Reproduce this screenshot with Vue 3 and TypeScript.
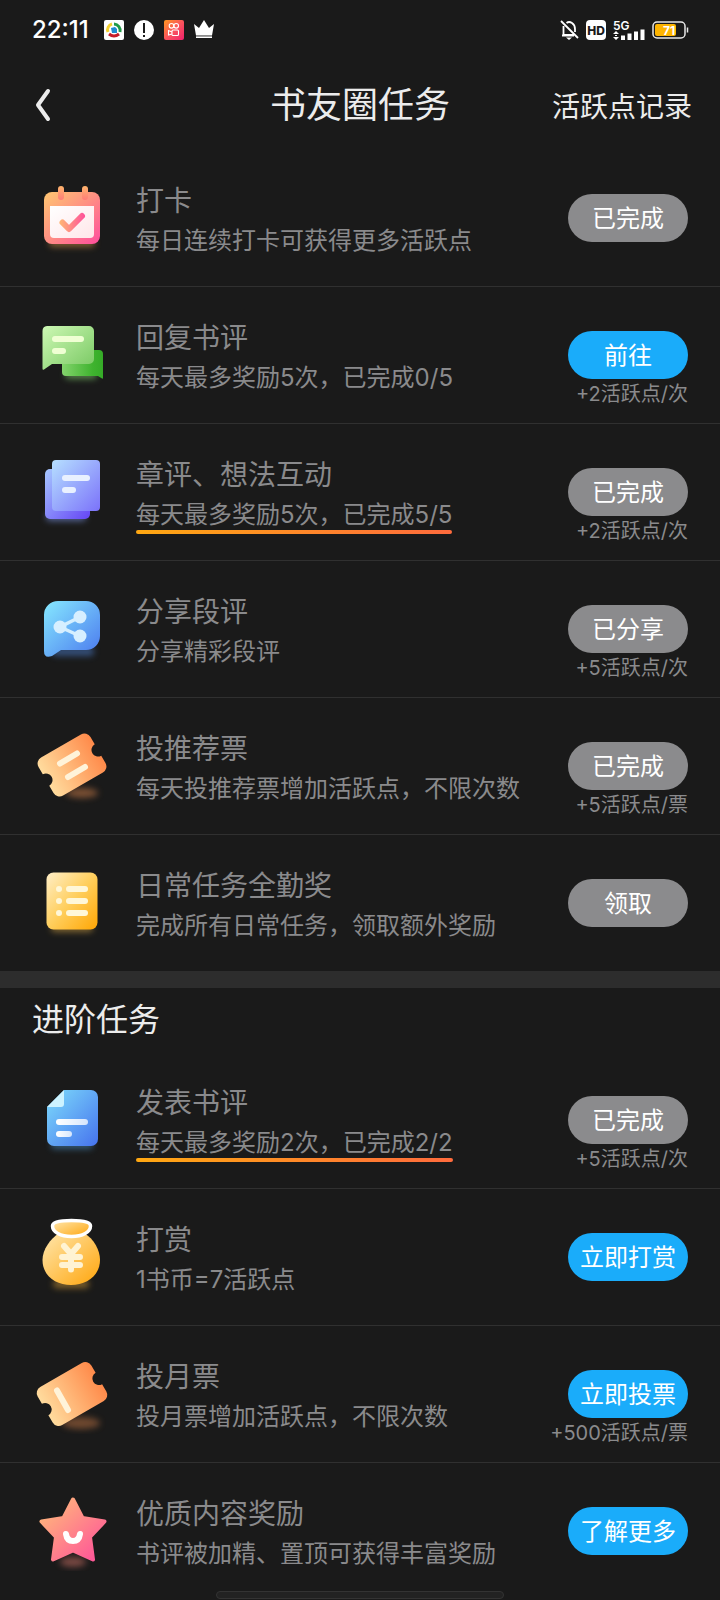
<script setup lang="ts">
type IconName =
  | 'calendar' | 'chat' | 'pages' | 'share' | 'ticket'
  | 'list' | 'doc' | 'bag' | 'pass' | 'star'

interface Task {
  icon: IconName
  title: string
  desc: string
  action: string
  active?: boolean
  reward?: string
  underlined?: boolean
}

const daily: Task[] = [
  { icon: 'calendar', title: '打卡', desc: '每日连续打卡可获得更多活跃点', action: '已完成' },
  { icon: 'chat', title: '回复书评', desc: '每天最多奖励5次，已完成0/5', action: '前往', active: true, reward: '+2活跃点/次' },
  { icon: 'pages', title: '章评、想法互动', desc: '每天最多奖励5次，已完成5/5', action: '已完成', reward: '+2活跃点/次', underlined: true },
  { icon: 'share', title: '分享段评', desc: '分享精彩段评', action: '已分享', reward: '+5活跃点/次' },
  { icon: 'ticket', title: '投推荐票', desc: '每天投推荐票增加活跃点，不限次数', action: '已完成', reward: '+5活跃点/票' },
  { icon: 'list', title: '日常任务全勤奖', desc: '完成所有日常任务，领取额外奖励', action: '领取' },
]

const advanced: Task[] = [
  { icon: 'doc', title: '发表书评', desc: '每天最多奖励2次，已完成2/2', action: '已完成', reward: '+5活跃点/次', underlined: true },
  { icon: 'bag', title: '打赏', desc: '1书币=7活跃点', action: '立即打赏', active: true },
  { icon: 'pass', title: '投月票', desc: '投月票增加活跃点，不限次数', action: '立即投票', active: true, reward: '+500活跃点/票' },
  { icon: 'star', title: '优质内容奖励', desc: '书评被加精、置顶可获得丰富奖励', action: '了解更多', active: true },
]

const groups = [
  { id: 'daily', heading: '', tasks: daily },
  { id: 'advanced', heading: '进阶任务', tasks: advanced },
]
</script>

<template>
  <div class="screen">
    <svg class="defs" width="0" height="0" aria-hidden="true">
      <defs>
        <linearGradient id="g-pink" x1="0" y1="0" x2="1" y2="1"><stop offset="0" stop-color="#ffc771" /><stop offset=".5" stop-color="#ff8e83" /><stop offset="1" stop-color="#ff4c9e" /></linearGradient>
        <linearGradient id="g-ring" x1="0" y1="0" x2="0" y2="1"><stop offset="0" stop-color="#ffb56c" /><stop offset="1" stop-color="#ff7c78" /></linearGradient>
        <linearGradient id="g-panel" x1="0" y1="0" x2="1" y2="1"><stop offset="0" stop-color="#ffffff" /><stop offset="1" stop-color="#ffe6e9" /></linearGradient>
        <linearGradient id="g-mint" x1="0" y1="0" x2="1" y2="1"><stop offset="0" stop-color="#cdf8b4" /><stop offset="1" stop-color="#78c862" /></linearGradient>
        <linearGradient id="g-green" x1="0" y1="0" x2="1" y2="0"><stop offset="0" stop-color="#83d46c" /><stop offset=".75" stop-color="#3fb32f" /><stop offset="1" stop-color="#35ab27" /></linearGradient>
        <linearGradient id="g-lilac" x1="0" y1="0" x2="1" y2="1"><stop offset="0" stop-color="#b6e0ff" /><stop offset="1" stop-color="#7b72fa" /></linearGradient>
        <linearGradient id="g-violet" x1="0" y1="0" x2="1" y2="1"><stop offset="0" stop-color="#a7c8ff" /><stop offset="1" stop-color="#6545f5" /></linearGradient>
        <linearGradient id="g-blue" x1="0" y1="0" x2="1" y2="1"><stop offset="0" stop-color="#86e9ff" /><stop offset="1" stop-color="#4a78ee" /></linearGradient>
        <linearGradient id="g-doc" x1="0" y1="0" x2="1" y2="1"><stop offset="0" stop-color="#7ddcfb" /><stop offset="1" stop-color="#4673ee" /></linearGradient>
        <linearGradient id="g-orange" x1="0" y1="0" x2="1" y2="0"><stop offset="0" stop-color="#ffdc9e" /><stop offset="1" stop-color="#ff8a4a" /></linearGradient>
        <linearGradient id="g-gold" x1="0" y1="0" x2="1" y2="1"><stop offset="0" stop-color="#ffefc8" /><stop offset=".5" stop-color="#ffce5c" /><stop offset="1" stop-color="#ffa604" /></linearGradient>
        <linearGradient id="g-bag" x1="0" y1="0" x2="1" y2="1"><stop offset="0" stop-color="#ffe7ae" /><stop offset="1" stop-color="#ffa50b" /></linearGradient>
        <linearGradient id="g-star" x1="0" y1="0" x2="1" y2="1"><stop offset=".1" stop-color="#ffb57c" /><stop offset=".9" stop-color="#ff5997" /></linearGradient>
        <linearGradient id="g-line" x1="0" y1="0" x2="1" y2="0"><stop offset="0" stop-color="#ffffff" /><stop offset="1" stop-color="#ffffff" stop-opacity=".75" /></linearGradient>
        <linearGradient id="g-check" gradientUnits="userSpaceOnUse" x1="28" y1="40" x2="52" y2="40"><stop offset="0" stop-color="#ffb576" /><stop offset="1" stop-color="#ff5499" /></linearGradient>
        <linearGradient id="g-app" x1="0" y1="0" x2="1" y2="1"><stop offset="0" stop-color="#ff971f" /><stop offset=".5" stop-color="#fa555c" /><stop offset="1" stop-color="#f0206c" /></linearGradient>
        <filter id="glow" x="-30%" y="-100%" width="160%" height="300%"><feGaussianBlur stdDeviation="3" /></filter>
      </defs>
    </svg>

    <div class="status">
      <time class="clock">22:11</time>
      <div class="notices">
        <svg width="20" height="20" viewBox="0 0 20 20" aria-hidden="true">
          <rect width="20" height="20" rx="2" fill="#fff" />
          <g fill="none" stroke-width="3">
            <path d="M4 12A6 6 0 0 1 8 4" stroke="#f5d131" />
            <path d="M10 4A6.500 6.500 0 0 1 16 12" stroke="#219a48" />
            <path d="M5 14Q10 18 15 14" stroke="#c51c29" />
          </g>
          <path d="M7 8l4-1 2 2v4H8z" fill="#218bd0" />
        </svg>
        <svg width="20" height="20" viewBox="0 0 20 20" aria-hidden="true">
          <circle cx="10" cy="10" r="10" fill="#fff" />
          <path d="M10 3v10M10 15v2" stroke="#1a1a1a" stroke-width="2" />
        </svg>
        <svg width="20" height="20" viewBox="0 0 20 20" aria-hidden="true">
          <rect width="20" height="20" rx="2" fill="url(#g-app)" />
          <g fill="none" stroke="#fff" stroke-width="1.100">
            <circle cx="7.500" cy="5.800" r="2.300" /><circle cx="12.200" cy="5.800" r="2.300" />
            <rect x="8" y="10" width="6.500" height="5.500" rx="1" /><path d="M8 12L4.500 10.500v4.500L8 14" />
          </g>
        </svg>
        <svg width="20" height="20" viewBox="0 0 20 20" aria-hidden="true">
          <path d="M0 4l5 4 5-8 5 8 5-4-2 11.500H2z" fill="#fff" />
          <path d="M2 17.200h16" stroke="#fff" stroke-width="1.600" />
        </svg>
      </div>
      <div class="signals">
        <svg width="20" height="20" viewBox="0 0 20 20" aria-label="静音">
          <g fill="none" stroke="#fff" stroke-width="1.800">
            <path d="M1 1l17 17M6.500 3Q9 1 12 3q3 2 3 6v3M3.500 6v9H14M2 15.500h12" />
          </g>
          <path d="M6 17.500h6L9 20z" fill="#fff" />
        </svg>
        <svg width="20" height="20" viewBox="0 0 20 20">
          <rect width="20" height="20" rx="4" fill="#fff" />
          <text x="10" y="14.500" text-anchor="middle" font-size="12" font-weight="800" fill="#1a1a1a">HD</text>
        </svg>
        <svg width="34" height="24" viewBox="0 0 34 24">
          <text x="1" y="12" font-size="12" font-weight="600" fill="#fff">5G</text>
          <path d="M1 16l3-3 3 3zM1 19l3 3 3-3z" fill="#fff" />
          <path d="M3 17h2v1H3z" fill="#fff" />
          <path d="M11 22v-4.500M17.500 22v-6.500M24 22v-8.500M30.500 22V11.500" stroke="#fff" stroke-width="4" />
        </svg>
        <svg width="37" height="18" viewBox="0 0 37 18">
          <rect x="1" y="1" width="32" height="16" rx="4" fill="none" stroke="#e8e8e8" stroke-width="1.500" />
          <rect x="3" y="3" width="21" height="12" rx="2" fill="#fdb400" />
          <path d="M35.500 6.500v5" stroke="#e8e8e8" stroke-width="1.500" />
          <text x="17" y="13.500" text-anchor="middle" font-size="12" font-weight="700" fill="#fff">71</text>
        </svg>
      </div>
    </div>

    <header class="nav">
      <button class="back" type="button" aria-label="返回">
        <svg width="16" height="34" viewBox="0 0 16 34" aria-hidden="true">
          <path d="M13 3L3 17l10 14" fill="none" stroke="#ececec" stroke-width="4" stroke-linecap="round" stroke-linejoin="round" />
        </svg>
      </button>
      <h1>书友圈任务</h1>
      <a class="records" href="#records">活跃点记录</a>
    </header>

    <main>
      <section v-for="group in groups" :key="group.id" class="group">
        <h2 v-if="group.heading">{{ group.heading }}</h2>
        <ul>
          <li v-for="task in group.tasks" :key="task.title" class="task">
            <svg class="icon" viewBox="0 0 80 80" aria-hidden="true">
              <template v-if="task.icon === 'calendar'">
                <rect x="17" y="61" width="46" height="8" rx="4" fill="#c58a45" opacity=".6" filter="url(#glow)" />
                <rect x="12" y="14" width="56" height="52" rx="8" fill="url(#g-pink)" />
                <rect x="26" y="8" width="6" height="14" rx="3" fill="url(#g-ring)" />
                <rect x="50" y="8" width="6" height="14" rx="3" fill="url(#g-ring)" />
                <path d="M18 28h44v28a4 4 0 0 1-4 4H22a4 4 0 0 1-4-4z" fill="url(#g-panel)" />
                <path d="M30.500 44.500l6.500 6.500L50 38" fill="none" stroke="url(#g-check)" stroke-width="6" stroke-linecap="round" stroke-linejoin="round" />
              </template>
              <template v-else-if="task.icon === 'chat'">
                <rect x="33" y="56" width="32" height="8" rx="4" fill="#80c86c" opacity=".6" filter="url(#glow)" />
                <path d="M34 35h33a4 4 0 0 1 4 4v24q0 1-1 0.500L66 61H34a4 4 0 0 1-4-4V39a4 4 0 0 1 4-4z" fill="url(#g-green)" />
                <path d="M15 11h42a5 5 0 0 1 5 5v28a5 5 0 0 1-5 5H20l-8 5.500q-1.500 1-1.500-1V16a5 5 0 0 1 4.500-5z" fill="url(#g-mint)" />
                <rect x="20" y="21" width="32" height="6" rx="3" fill="#efffd3" />
                <rect x="20" y="33" width="14" height="6" rx="3" fill="#efffd3" />
              </template>
              <template v-else-if="task.icon === 'pages'">
                <rect x="14" y="61" width="40" height="8" rx="4" fill="#7d98e8" opacity=".6" filter="url(#glow)" />
                <rect x="13" y="17" width="45" height="50" rx="5" fill="url(#g-violet)" />
                <rect x="20" y="8" width="48" height="51" rx="4" fill="url(#g-lilac)" />
                <rect x="30" y="23" width="28" height="6" rx="3" fill="#e9f1ff" />
                <rect x="30" y="35" width="14" height="6" rx="3" fill="#e9f1ff" />
              </template>
              <template v-else-if="task.icon === 'share'">
                <rect x="20" y="58" width="42" height="9" rx="4" fill="#4675bb" opacity=".6" filter="url(#glow)" />
                <path d="M26 12h28a14 14 0 0 1 14 14v21a14 14 0 0 1-14 14H29l-9 6q-8 3-8-5V26a14 14 0 0 1 14-14z" fill="url(#g-blue)" />
                <path d="M48 28L28 38l20 9" fill="none" stroke="#d5efff" stroke-width="3.500" />
                <g fill="#d7efff"><circle cx="28" cy="38" r="6.500" /><circle cx="48" cy="28" r="6.500" /><circle cx="48" cy="47" r="6.500" /></g>
              </template>
              <template v-else-if="task.icon === 'ticket'">
                <ellipse cx="50" cy="67" rx="16" ry="5" fill="#bd7545" opacity=".6" filter="url(#glow)" />
                <path transform="rotate(-30 40 39)" d="M17 17h46a7 7 0 0 1 7 7v8.500a6.500 6.500 0 0 0 0 13V54a7 7 0 0 1-7 7H17a7 7 0 0 1-7-7v-8.500a6.500 6.500 0 0 0 0-13V24a7 7 0 0 1 7-7z" fill="url(#g-orange)" />
                <path d="M28 37.500l17-10M36 51l17-10" stroke="#fff3d9" stroke-width="6" stroke-linecap="round" />
              </template>
              <template v-else-if="task.icon === 'list'">
                <rect x="19" y="61" width="42" height="8" rx="4" fill="#c79a3f" opacity=".6" filter="url(#glow)" />
                <rect x="14.500" y="9.500" width="51" height="57" rx="7" fill="url(#g-gold)" />
                <g fill="#fff7d8">
                  <circle cx="27" cy="26" r="3" /><circle cx="27" cy="38" r="3" /><circle cx="27" cy="50" r="3" />
                  <rect x="34" y="23" width="22" height="6" rx="3" /><rect x="34" y="35" width="22" height="6" rx="3" /><rect x="34" y="47" width="22" height="6" rx="3" />
                </g>
              </template>
              <template v-else-if="task.icon === 'doc'">
                <rect x="19" y="61" width="42" height="8" rx="4" fill="#4687b5" opacity=".6" filter="url(#glow)" />
                <path d="M32 10h27a7 7 0 0 1 7 7v42a7 7 0 0 1-7 7H22a7 7 0 0 1-7-7V27z" fill="url(#g-doc)" />
                <path d="M32 10v14q0 3-3 3H15z" fill="#cdf3ff" />
                <rect x="24" y="39" width="32" height="6" rx="3" fill="url(#g-line)" />
                <rect x="24" y="51" width="16" height="6" rx="3" fill="url(#g-line)" />
              </template>
              <template v-else-if="task.icon === 'bag'">
                <rect x="21" y="63" width="36" height="8" rx="4" fill="#c79337" opacity=".6" filter="url(#glow)" />
                <path d="M27 16h25c10 6 16 17 16 27 0 16-14 25-29 25S10.500 59 10.500 43c0-11 8-21 16.500-27z" fill="url(#g-bag)" />
                <path d="M20.500 9C20.500 5 28 3.500 39.500 3.500S58.500 5 58.500 9c0 6-8 10.500-19 10.500S20.500 15 20.500 9z" fill="url(#g-bag)" stroke="#fff" stroke-width="3.500" />
                <path d="M32 29l7 8 7-8M39 37v15.500M30 40h18M30 48h18" fill="none" stroke="#fff3d3" stroke-width="6" stroke-linecap="round" stroke-linejoin="round" />
              </template>
              <template v-else-if="task.icon === 'pass'">
                <ellipse cx="49" cy="69" rx="19" ry="6" fill="#a8683c" opacity=".6" filter="url(#glow)" />
                <path transform="rotate(-30 40 40)" d="M16 18h48a7 7 0 0 1 7 7v8.500a6.500 6.500 0 0 0 0 13V55a7 7 0 0 1-7 7H16a7 7 0 0 1-7-7v-8.500a6.500 6.500 0 0 0 0-13V25a7 7 0 0 1 7-7z" fill="url(#g-orange)" />
                <path d="M25 36.500l11 19.500" stroke="#fff3d9" stroke-width="6" stroke-linecap="round" />
              </template>
              <template v-else>
                <ellipse cx="41" cy="71" rx="13" ry="5" fill="#a45d55" opacity=".7" filter="url(#glow)" />
                <path d="M41 8.500l9.500 18.500L72.500 30.500 58 46l3 22.500-20-9-20 9 3-22.500L9.500 30.500 31.500 27z" fill="url(#g-star)" stroke="url(#g-star)" stroke-width="4" stroke-linejoin="round" />
                <path d="M34 43q1 7 7 7t7-7" fill="none" stroke="#fff" stroke-width="6" stroke-linecap="round" />
              </template>
            </svg>
            <div class="text">
              <h3>{{ task.title }}</h3>
              <p><span :class="{ underlined: task.underlined }">{{ task.desc }}</span></p>
            </div>
            <div class="side">
              <button type="button" class="action" :class="{ active: task.active }">{{ task.action }}</button>
              <span v-if="task.reward" class="reward">{{ task.reward }}</span>
            </div>
          </li>
        </ul>
      </section>
    </main>
    <div class="home-bar"></div>
  </div>
</template>

<style>
body {
  margin: 0;
  background: #1a1a1a;
}
</style>

<style scoped>
.screen {
  position: relative;
  min-height: 100vh;
  background: #1a1a1a;
  color: #ececec;
  font-family: Inter, "Noto Sans CJK SC", sans-serif;
}
.defs {
  position: absolute;
}
.status {
  display: flex;
  align-items: center;
  height: 60px;
  padding: 0 31px 0 32px;
  box-sizing: border-box;
}
.clock {
  font-size: 24px;
  line-height: 32px;
  font-weight: 500;
  color: #fff;
}
.notices {
  display: flex;
  gap: 10px;
  margin-left: 15px;
}
.signals {
  display: flex;
  align-items: center;
  gap: 6px;
  margin-left: auto;
}
.nav {
  display: grid;
  grid-template-columns: 1fr auto 1fr;
  align-items: center;
  height: 90px;
  padding: 0 28px;
  box-sizing: border-box;
}
.back {
  justify-self: start;
  display: flex;
  padding: 0 7px;
  border: 0;
  background: none;
}
h1, h2, h3, p, ul {
  margin: 0;
  padding: 0;
  font-weight: 400;
}
h1 {
  font-size: 36px;
  line-height: 48px;
}
.records {
  justify-self: end;
  padding-top: 4px;
  font-size: 28px;
  line-height: 40px;
  color: #ececec;
  text-decoration: none;
}
.group + .group {
  border-top: 17px solid #2d2d2d;
}
h2 {
  padding: 8px 32px;
  font-size: 32px;
  line-height: 48px;
}
ul {
  list-style: none;
}
.task {
  display: flex;
  min-height: 137px;
  box-sizing: border-box;
  padding: 0 32px;
  border-bottom: 1px solid #303030;
}
.task:last-child {
  min-height: 136px;
  border-bottom: 0;
}
.icon {
  flex: none;
  width: 80px;
  height: 80px;
  margin-top: 28px;
}
.text {
  flex: 1;
  min-width: 0;
  padding: 31px 0 0 24px;
  color: #8a8a8c;
  white-space: nowrap;
}
h3 {
  font-size: 28px;
  line-height: 40px;
}
p {
  font-size: 24px;
  line-height: 40px;
}
p span {
  display: inline-block;
}
.underlined {
  position: relative;
}
.underlined::after {
  content: "";
  position: absolute;
  right: 0;
  bottom: 1px;
  left: 0;
  height: 4px;
  border-radius: 2px;
  background: linear-gradient(90deg, #ffa812, #ff6b3d);
}
.side {
  flex: none;
  display: flex;
  flex-direction: column;
  align-items: flex-end;
  width: 120px;
  padding-top: 44px;
}
.action {
  width: 120px;
  height: 48px;
  padding: 2px 0 0;
  border: 0;
  border-radius: 24px;
  background: #8b8b8d;
  color: #fff;
  font-family: inherit;
  font-size: 24px;
  line-height: 46px;
}
.action.active {
  background: #1aacfa;
}
.reward {
  font-size: 20px;
  line-height: 30px;
  color: #8a8a8c;
  white-space: nowrap;
}
.home-bar {
  position: absolute;
  bottom: 1px;
  left: 50%;
  width: 40%;
  height: 8px;
  box-sizing: border-box;
  transform: translateX(-50%);
  border: 1px solid #333;
  border-radius: 4px;
  background: #222;
}
</style>
